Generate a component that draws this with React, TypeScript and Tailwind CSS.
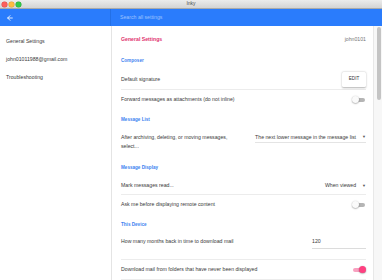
import { ArrowLeft } from 'lucide-react';

const Toggle = ({ on }: { on?: boolean }) => (
  <div className="relative h-[8px] w-[14px]">
    <div className={`absolute left-[1px] right-[1px] top-[2px] h-[4px] rounded-full ${on ? 'bg-[#f8a1c0]' : 'bg-[#b5b5b5]'}`} />
    <div
      className={`absolute top-0 h-[7px] w-[7px] rounded-full shadow-[0_0.5px_1.5px_rgba(0,0,0,0.45)] ${
        on ? 'right-0 bg-[#ff4081]' : 'left-0 bg-[#fafafa]'
      }`}
    />
  </div>
);

const Header = ({ label, h }: { label: string; h: string }) => (
  <div className={`flex items-center text-[4.6px] font-bold text-[#3b82f0] ${h}`}>{label}</div>
);

const Row = ({ h, border = true, children }: { h: string; border?: boolean; children: React.ReactNode }) => (
  <div className={`flex items-center justify-between ${h} ${border ? 'border-b border-[#ececec]' : ''}`}>{children}</div>
);

export default function App() {
  return (
    <div className="flex h-[280px] w-[382px] flex-col overflow-hidden bg-white font-['Liberation_Sans',Arial,sans-serif] text-[5.2px] text-[#3a3a3a]">
      {/* title bar */}
      <div className="relative flex h-[9px] shrink-0 items-center justify-center border-b border-[#a9a9a9] bg-gradient-to-b from-[#ececec] to-[#d4d4d4]">
        <div className="absolute left-[2px] top-[2px] flex gap-[2px]">
          <span className="h-[5px] w-[5px] rounded-full bg-[#fc605c] ring-[0.5px] ring-[#de4a45]" />
          <span className="h-[5px] w-[5px] rounded-full bg-[#fdbc40] ring-[0.5px] ring-[#de9f34]" />
          <span className="h-[5px] w-[5px] rounded-full bg-[#34c84a] ring-[0.5px] ring-[#27aa35]" />
        </div>
        <span className="text-[5px] text-[#4d4d4d]">Inky</span>
      </div>

      {/* blue header */}
      <div className="flex h-[17px] shrink-0 bg-[#2a7cfc]">
        <div className="flex w-[111px] items-center border-r border-[#2370e6] pl-[6px]">
          <ArrowLeft size={8} strokeWidth={2.5} color="#ffffff" />
        </div>
        <div className="flex flex-1 items-center pl-[9px] text-[5.2px] text-[#9dc2ff]">Search all settings</div>
      </div>

      <div className="flex min-h-0 flex-1">
        {/* sidebar */}
        <div className="w-[112px] shrink-0 border-r border-[#e4e4e4] pt-[7px] pl-[6px]">
          <div className="flex h-[18px] items-center">General Settings</div>
          <div className="flex h-[18px] items-center">john01011988@gmail.com</div>
          <div className="flex h-[18px] items-center">Troubleshooting</div>
        </div>

        {/* main */}
        <div className="min-w-0 flex-1 pl-[9px] pr-[7px] pt-[2px]">
          <div className="flex h-[24px] items-center justify-between">
            <span className="font-bold text-[#e0336f]">General Settings</span>
            <span className="text-[#777]">john0101</span>
          </div>
          <Header label="Composer" h="h-[18px]" />
          <Row h="h-[20px]">
            <span>Default signature</span>
            <div className="flex h-[15px] w-[24px] items-center justify-center rounded-[1.5px] bg-white text-[4.6px] font-medium text-[#333] shadow-[0_0.5px_2px_rgba(0,0,0,0.3)]">
              EDIT
            </div>
          </Row>
          <Row h="h-[19px]" border={false}>
            <span>Forward messages as attachments (do not inline)</span>
            <Toggle />
          </Row>
          <Header label="Message List" h="h-[22px]" />
          <div className="flex h-[27px] items-start justify-between pt-[2px]">
            <span className="leading-[9px]">
              After archiving, deleting, or moving messages,
              <br />
              select...
            </span>
            <div className="flex items-center gap-[6px] border-b border-[#e4e4e4] pb-[1px] leading-[8px]">
              <span>The next lower message in the message list</span>
              <span className="text-[4px] text-[#555]">▼</span>
            </div>
          </div>
          <Header label="Message Display" h="h-[20px]" />
          <Row h="h-[17px]">
            <span>Mark messages read...</span>
            <div className="flex items-center gap-[6px]">
              <span>When viewed</span>
              <span className="text-[4px] text-[#555]">▼</span>
            </div>
          </Row>
          <Row h="h-[19px]" border={false}>
            <span>Ask me before displaying remote content</span>
            <Toggle />
          </Row>
          <Header label="This Device" h="h-[22px]" />
          <div className="flex h-[24px] items-start justify-between border-b border-[#ececec] pt-[2px]">
            <span>How many months back in time to download mail</span>
            <div className="w-[54px] border-b border-[#dcdcdc] pb-[2px]">120</div>
          </div>
          <Row h="h-[20px]">
            <span>Download mail from folders that have never been displayed</span>
            <Toggle on />
          </Row>
        </div>

        {/* scrollbar */}
        <div className="w-[9px] shrink-0 border-l border-[#e8e8e8] bg-[#f7f7f7] pt-[1px]">
          <div className="ml-[3px] h-[73px] w-[4px] rounded-full bg-[#c4c4c4]" />
        </div>
      </div>
    </div>
  );
}
